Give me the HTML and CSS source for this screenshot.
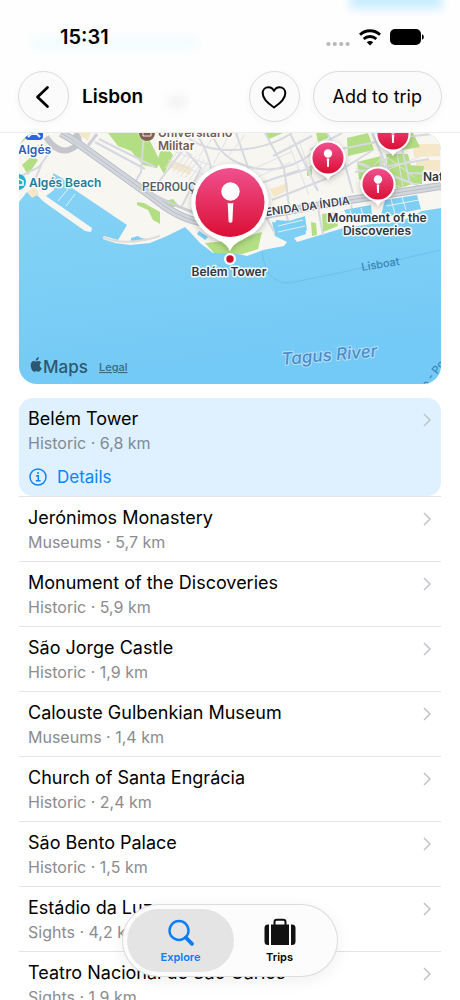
FILE: index.html
```html
<!DOCTYPE html>
<html lang="en">
<head>
<meta charset="utf-8">
<meta name="viewport" content="width=device-width, initial-scale=1">
<title>Lisbon</title>
<link rel="stylesheet" href="styles.css">
</head>
<body>
<div class="app">
  <header class="header">
    <span class="glow glow-action"></span>
    <span class="glow glow-text"></span>
    <span class="glow glow-shade"></span>
    <div class="status">
      <span class="time">15:31</span>
      <span class="status-icons">
        <svg width="24" height="6" viewBox="0 0 24 6" fill="#b9b9bb"><circle cx="2.4" cy="3" r="2.1"/><circle cx="8.8" cy="3" r="2.1"/><circle cx="15.2" cy="3" r="2.1"/><circle cx="21.6" cy="3" r="2.1"/></svg>
        <svg width="22" height="17" viewBox="0 0 22 17" fill="none" stroke="#000" stroke-width="2.9"><path d="M1 5.8a14.4 14.4 0 0 1 20 0"/><path d="M4.7 10a9.1 9.1 0 0 1 12.6 0"/><path d="M11 16.5l-3.2-3.3a4.6 4.6 0 0 1 6.4 0z" fill="#000" stroke="none"/></svg>
        <svg width="34" height="16" viewBox="0 0 34 16"><rect width="31" height="16" rx="5"/><path d="M32 5.2c2.4.8 2.4 4.8 0 5.6z"/></svg>
      </span>
    </div>
    <div class="toolbar">
      <button class="glass round" aria-label="Back"><svg width="26" height="26" viewBox="0 0 26 26" fill="none" stroke="#000" stroke-width="2.7" stroke-linecap="round" stroke-linejoin="round"><path d="M16.500 3.500L6.500 13l10 9.500"/></svg></button>
      <h1 class="title">Lisbon</h1>
      <button class="glass round" aria-label="Favourite"><svg width="26" height="26" viewBox="0 0 26 26" fill="none" stroke="#000" stroke-width="2" stroke-linejoin="round"><path d="M13 23.500C8.500 20.500 1.700 15.500 1.700 9.300c0-3.600 2.500-6.100 5.700-6.100 2.500 0 4.500 1.300 5.600 3.700 1.100-2.400 3.100-3.700 5.600-3.700 3.200 0 5.700 2.500 5.700 6.100C24.300 15.500 17.500 20.500 13 23.500z"/></svg></button>
      <button class="glass add">Add to trip</button>
    </div>
  </header>

  <main class="content">
    <svg class="map" viewBox="19 133 422 251" role="img" aria-label="Map of Lisbon">
      <defs>
        <linearGradient id="water" x1="0" y1="0" x2="0.2" y2="1"><stop offset="0" stop-color="#8ad5f5"/><stop offset="1" stop-color="#73caf6"/></linearGradient>
        <linearGradient id="pink" x1="0" y1="0" x2="0" y2="1"><stop offset="0" stop-color="#f0508e"/><stop offset="1" stop-color="#da0f34"/></linearGradient>
        <filter id="shade" x="-30%" y="-30%" width="160%" height="170%"><feDropShadow dx="0" dy="2" stdDeviation="3" flood-color="#000" flood-opacity="0.25"/></filter>
        <g id="pin">
          <path d="M0 22C-2 18-5 17-8 15.500A17.500 17.500 0 1 1 8 15.500C5 17 2 18 0 22z" fill="#fff" filter="url(#shade)"/>
          <circle r="15.500" fill="url(#pink)"/>
          <circle cy="-4.500" r="4.200" fill="#fff"/>
          <path d="M-1.300 0.500h2.600L.8 9h-1.600z" fill="#fff"/>
        </g>
      </defs>
      <rect x="19" y="133" width="422" height="251" fill="url(#water)"/>
      <path fill="#f8f6f1" d="M19 133H441V208L422 211 400 222 372 224 343 228 327 233 297 242 294 238 306 234 304 219 288 223 272 222 275 236 287 242 284 246 263 250 247 256 230 252 213 253 200 243 190 232 185 227 167 236 150 243 130 245 115 243 103 239 104 236 118 240 127 225 72 188 62 178 53 173 54 190 46 196 92 228 91 232 85 231 44 202 37 195 27 192 19 202z"/>
      <path fill="#f5e7c8" d="M27 192l8-5 4 7-7 4zM168 159l24 8-2 8-24-9zM205 175l20 5 0 6-20-5zM270 189l18-6v7l-14 7zM413 144l27 0v12l-26 1zM416 160h24v12l-24-3zM77 133h14l-3 8z"/>
      <g fill="#b4de83">
        <path d="M108 133h38l14 28-3 7-14-3-12-14-13-5z"/>
        <path d="M137 202l7 1 16 9v12l-7-4-5-10-11-5zM163 142l10 13-9 19-7-12zM165 201l8-2 5 6-8 4z"/>
        <path d="M347 138l21-5 6 17-26 6zM316 133l12 0 0 5-10 4zM307 168l5-3v10l-5 1zM322 214l14-2 2 14-15 6zM311 222l5 1 1 12-5 1z"/>
        <path d="M357 162l24-6 8 24-10 8-20-9zM386 154l22 0 7 29-17 6-9-7zM396 133h17l7 14-18 3zM407 165l17 1-2 18-14-1z"/>
        <path d="M205 243l30-3 27-8-4 17-16 5-28-1zM269 139l14-6h-17z"/>
        <path d="M22 165l10-9 6 4-10 15zM19 138l10-5h3l-13 12z"/>
      </g>
      <g fill="none" stroke="#d6d9df" stroke-width="2">
        <path d="M95 142l50 27M91 154l61 37M99 139l56 28M144 133l-3 39-8 14M152 191l30-40M175 133l4 10 22 25-20 40"/>
        <path d="M183 133q17 18 51 17t58-17M196 133q20 30 16 64M212 133q8 28 42 35t66-21M236 133l14 40-6 20M265 133l19 35 5 38M290 133l28 58M300 170l-60 20M272 200l56-22 45-28M310 150l32-17M327 133l17 28 9 32M285 176l45-14M273 156l39-20M336 150l60-12 45-5M372 133l20 45"/>
        <path d="M398 133l12 50M357 162l65 25M365 186l22-28M355 172l74-13M381 155l-2 38M19 177l20-10 16-22M32 187l10-24M266 217l11 20M285 209l4 15M317 202l6 33M350 198l4 24M441 174l-32-1"/>
      </g>
      <g fill="none" stroke="#dfe1e5" stroke-width="1">
        <path d="M180 148l-15 20M184 150l-15 20M188 152l-15 20M192 154l-15 20M196 156l-15 20M200 158l-15 20M204 160l-15 20M208 162l-13 20M174 151l50 20M168 160l48 20M217 133l-18 23M228 137l-14 26M245 135l-16 20M251 170l40-18M251 180l40-18M289 145l20 50M299 140l16 48"/>
        <path d="M358 164l55 20M355 168l49 21M387 157l27 20M389 169l30-12M361 180l20-22M370 184l18-26M397 153l6 34M19 153l34-13"/>
      </g>
      <g fill="none" stroke-linejoin="round">
        <path d="M46 137q12 18 25 12t4-16" stroke="#c3c6cc" stroke-width="6"/>
        <path d="M61 133Q70 138 76 142L151 196Q177 218 200 222T270 214L350 200 441 186" stroke="#b9bec7" stroke-width="8"/>
        <path d="M61 133Q70 138 76 142L151 196Q177 218 200 222T270 214L350 200 441 186" stroke="#d3d6dc" stroke-width="6"/>
        <path d="M61 133Q70 138 76 142L151 196Q177 218 200 222T270 214L350 200 441 186" stroke="#b9bec7" stroke-width="1"/>
        <path d="M150 193Q173 205 195 213M74 142l13 5 10-13" stroke="#cdd1d7" stroke-width="3"/>
      </g>
      <g fill="#7dcff4">
        <path d="M276 220l13 1 16-5 2 14-15 9-17-3zM344 210l27-5 1 11-23 3zM385 200l32-5 4 14-19 4-22 6zM131 238l7-2 3 2 6 1-2 2h-14zM199 231l9 6-3 3-8-6z"/>
      </g>
      <g fill="none" stroke="#e9eeed" stroke-width="1"><path d="M68 189l-10 12M75 194l-9 12M278 226l25-6M278 232l27-6M386 206l33-6M391 199l4 15M402 197l4 13M350 210l2 8M361 208l2 8"/></g>
      <path d="M103 237q22 10 57-1" fill="none" stroke="#deddd7" stroke-width="2"/>
      <path d="M262 252Q267 288 295 282L348 271 441 250" fill="none" stroke="#6dc0e8" stroke-width="1"/>

      <g class="place brown">
        <circle cx="147" cy="133" r="8" fill="#80604e"/><path d="M143 131h8v5h-8z" fill="none" stroke="#fff" stroke-width="1.500"/>
        <text x="158" y="137">Universitário</text><text x="158" y="150">Militar</text>
      </g>
      <path d="M25 133h18v3q0 4-4 4H29q-4 0-4-4z" fill="#2b66e2"/><path d="M28 137l3-3h6l3 3" fill="none" stroke="#fff" stroke-width="2"/>
      <text class="place blue" x="18" y="154">Algés</text>
      <circle cx="18" cy="182" r="8" fill="#20b3d1"/><path d="M19 179l4 2v4h-4" fill="none" stroke="#fff" stroke-width="1.500"/>
      <text class="place teal" x="29" y="187">Algés Beach</text>
      <text class="district" x="142" y="191">PEDROUÇ</text>
      <text class="road" transform="translate(266 216) rotate(-8)">ENIDA DA ÍNDIA</text>
      <text class="place" x="423" y="181">Nat</text>
      <text class="ferry" transform="translate(362 271) rotate(-9)">Lisboat</text>
      <text class="ferry" transform="translate(427 389) rotate(-54)">n - Port</text>
      <text class="river" transform="translate(282 365) rotate(-5)">Tagus River</text>

      <use href="#pin" x="328" y="158"/>
      <use href="#pin" x="393" y="134"/>
      <use href="#pin" x="378" y="184"/>
      <text class="place" x="377" y="222" text-anchor="middle">Monument of the</text>
      <text class="place" x="377" y="235" text-anchor="middle">Discoveries</text>

      <path d="M230 251C226 242 219 241 212 236.500A38.500 38.500 0 1 1 248 236.500C241 241 234 242 230 251z" fill="#fff" filter="url(#shade)"/>
      <circle cx="230" cy="202.500" r="34.500" fill="url(#pink)"/>
      <circle cx="230.500" cy="191.500" r="9.200" fill="#fff"/>
      <path d="M227.700 202.700q2.800 1 5.600 0l-.9 19q-1.900 2-3.800 0z" fill="#fff"/>
      <circle cx="230" cy="259" r="6" fill="#fff"/><circle cx="230" cy="259" r="3.700" fill="#c8102e"/>
      <text class="place" x="229" y="276" text-anchor="middle">Belém Tower</text>

      <g fill="#2b5870">
        <path d="M39.800 362.200c-.8-1.200-2-1.300-2.700-1.200-1 .1-1.600.6-2.200.6s-1.400-.6-2.200-.5c-1.600.1-3 1.500-3 4.200 0 3 2 6.500 3.500 6.500.8 0 1.200-.5 2.200-.5 1 0 1.400.5 2.200.5 1.500 0 2.800-2.400 3.200-3.700-2.500-1.100-2.800-4.500-.1-5.900zM37.800 357c-1.800.3-3.200 1.900-3 3.700 1.700 0 3.200-1.800 3-3.700z" transform="translate(1)"/>
        <text class="brand" x="43" y="373">Maps</text>
      </g>
      <a href="#legal"><text class="legal" x="99" y="371">Legal</text></a>
    </svg>

    <ul class="list">
      <li class="row first">
        <a class="entry" href="#belem"><span class="name">Belém Tower</span><span class="meta">Historic · 6,8 km</span></a>
        <svg class="chevron" viewBox="0 0 8 14"><path d="M1 1l6 6-6 6"/></svg>
        <a class="details" href="#details"><svg width="20" height="20" viewBox="0 0 20 20" fill="none" stroke="#0a84ff" stroke-width="1.500"><circle cx="10" cy="10" r="8"/><path d="M8 8.700h2.300v4.900M7.800 13.800h4.800"/><circle cx="10" cy="6" r=".6" fill="#0a84ff" stroke-width="1"/></svg>Details</a>
      </li>
      <li class="row"><a class="entry" href="#p2"><span class="name">Jerónimos Monastery</span><span class="meta">Museums · 5,7 km</span></a><svg class="chevron" viewBox="0 0 8 14"><path d="M1 1l6 6-6 6"/></svg></li>
      <li class="row"><a class="entry" href="#p3"><span class="name">Monument of the Discoveries</span><span class="meta">Historic · 5,9 km</span></a><svg class="chevron" viewBox="0 0 8 14"><path d="M1 1l6 6-6 6"/></svg></li>
      <li class="row"><a class="entry" href="#p4"><span class="name">São Jorge Castle</span><span class="meta">Historic · 1,9 km</span></a><svg class="chevron" viewBox="0 0 8 14"><path d="M1 1l6 6-6 6"/></svg></li>
      <li class="row"><a class="entry" href="#p5"><span class="name">Calouste Gulbenkian Museum</span><span class="meta">Museums · 1,4 km</span></a><svg class="chevron" viewBox="0 0 8 14"><path d="M1 1l6 6-6 6"/></svg></li>
      <li class="row"><a class="entry" href="#p6"><span class="name">Church of Santa Engrácia</span><span class="meta">Historic · 2,4 km</span></a><svg class="chevron" viewBox="0 0 8 14"><path d="M1 1l6 6-6 6"/></svg></li>
      <li class="row"><a class="entry" href="#p7"><span class="name">São Bento Palace</span><span class="meta">Historic · 1,5 km</span></a><svg class="chevron" viewBox="0 0 8 14"><path d="M1 1l6 6-6 6"/></svg></li>
      <li class="row"><a class="entry" href="#p8"><span class="name">Estádio da Luz</span><span class="meta">Sights · 4,2 km</span></a><svg class="chevron" viewBox="0 0 8 14"><path d="M1 1l6 6-6 6"/></svg></li>
      <li class="row"><a class="entry" href="#p9"><span class="name">Teatro Nacional de São Carlos</span><span class="meta">Sights · 1,9 km</span></a><svg class="chevron" viewBox="0 0 8 14"><path d="M1 1l6 6-6 6"/></svg></li>
    </ul>
  </main>

  <nav class="tabbar" aria-label="Main">
    <button class="tab active"><svg width="30" height="30" viewBox="0 0 30 30" fill="none" stroke="#0a7cf5"><circle cx="13" cy="12.500" r="9.500" stroke-width="2.400"/><path d="M19.800 19.500l6.200 6.300" stroke-width="3.800" stroke-linecap="round"/></svg>Explore</button>
    <button class="tab"><svg width="32" height="30" viewBox="0 0 32 30"><path d="M5 6.500v20.500h-1q-3.500 0-3.500-3.500V10q0-3.500 3.500-3.500zM27 6.500h1q3.500 0 3.500 3.500v13.500q0 3.500-3.500 3.500h-1zM7 6.500h18v20.500H7z" fill="#111"/><path d="M10.500 7V4q0-2.300 2.300-2.300h6.400q2.300 0 2.300 2.300v3" fill="none" stroke="#111" stroke-width="2"/></svg>Trips</button>
  </nav>
</div>
</body>
</html>
```
FILE: styles.css
```css
* { box-sizing: border-box; }
body { margin: 0; background: #fff; color: #000; font-family: Inter, "Liberation Sans", sans-serif; }
button { border: 0; padding: 0; background: none; color: inherit; font: inherit; }
a { color: inherit; text-decoration: none; }
svg { display: block; flex: none; }

.app { position: relative; display: flex; flex-direction: column; height: 100vh; overflow: hidden; }

.header { position: relative; flex: none; padding: 24px 18px 10px; border-bottom: 1px solid #ededee; background: #fefefe; overflow: hidden; }
.glow { position: absolute; filter: blur(5px); }
.glow-action { top: -12px; right: 18px; width: 92px; height: 21px; background: #c9edff; }
.glow-text { top: 37px; left: 32px; width: 165px; height: 11px; background: #effbfd; }
.glow-shade { top: 97px; left: 168px; width: 18px; height: 10px; background: #f0f0f3; }

.status { position: relative; display: flex; align-items: center; justify-content: space-between; height: 26px; padding: 0 18px 0 42px; }
.time { font-size: 20px; font-weight: 600; }
.status-icons { display: flex; align-items: center; gap: 9px; }
.status-icons svg:first-child { margin-top: 13px; }

.toolbar { position: relative; display: flex; align-items: center; gap: 13px; margin-top: 21px; }
.title { flex: 1; margin: 0; font-size: 19px; font-weight: 600; line-height: 24px; }
.glass { display: flex; align-items: center; justify-content: center; height: 51px; border: 1px solid #dcdcde; border-radius: 26px; background: #fbfbfc; box-shadow: 0 2px 10px rgba(0, 0, 0, 0.04); }
.round { width: 51px; }
.add { padding: 0 18px; font-size: 18px; }
.add { padding: 0 19px; }

.content { flex: 1; min-height: 0; padding: 0 19px; overflow-y: auto; scrollbar-width: none; }
.map { width: 100%; height: auto; border-radius: 18px; overflow: hidden; }
.place { font-size: 12px; font-weight: 600; fill: #30363d; stroke: #fff; stroke-width: 3px; stroke-opacity: 0.85; stroke-linejoin: round; paint-order: stroke; }
.brown { fill: #765b50; }
.brown circle, .brown path { stroke-width: 1px; }
.blue { fill: #2c5fb6; }
.teal { fill: #187e9e; }
.district { font-family: Roboto, sans-serif; font-size: 12px; font-weight: 500; fill: #565b62; stroke: #fff; stroke-width: 2px; paint-order: stroke; }
.road { font-size: 11px; font-weight: 600; fill: #3c4353; stroke: #fff; stroke-width: 2px; paint-order: stroke; }
.ferry { font-size: 11px; font-weight: 500; fill: #3a86b8; }
.river { font-size: 17px; font-style: italic; font-weight: 500; fill: #4b8dcc; stroke: #b3dff7; stroke-width: 2px; paint-order: stroke; }
.brand { font-size: 17px; font-weight: 500; }
.legal { font-size: 11px; font-weight: 500; fill: #386983; text-decoration: underline; }

.list { margin: 14px 0 0; padding: 0; list-style: none; }
.row { display: grid; grid-template-columns: 1fr auto; padding: 9px 10px 7px 9px; border-bottom: 1px solid #e5e5e7; }
.first { position: relative; z-index: 0; }
.first::before { content: ""; position: absolute; inset: 0; z-index: -1; border-radius: 14px; background: #dff0ff; }
.entry { display: flex; flex-direction: column; }
.name { font-size: 18px; line-height: 24px; }
.meta { color: #8b8b90; font-size: 16px; line-height: 24px; }
.first .meta { color: #818a94; }
.chevron { width: 8px; height: 14px; margin-top: 6px; fill: none; stroke: #bfc2c7; stroke-width: 1.5px; }
.details { display: flex; align-items: center; gap: 9px; height: 24px; margin-top: 10px; color: #0a84ff; font-size: 17px; }

.tabbar { position: absolute; bottom: 24px; left: 50%; display: flex; padding: 4px; border-radius: 36px; background: #fcfcfc; box-shadow: 0 0 0 1px #dcdcdd, 0 4px 18px rgba(0, 0, 0, 0.07); transform: translateX(-50%); }
.tab { display: flex; flex-direction: column; align-items: center; justify-content: center; gap: 2px; width: 107px; height: 63px; border-radius: 32px; font-size: 11px; font-weight: 600; line-height: 14px; }
.tab + .tab { margin-left: -8px; }
.active { background: #e4e4e5; color: #0a7cf5; }
```
